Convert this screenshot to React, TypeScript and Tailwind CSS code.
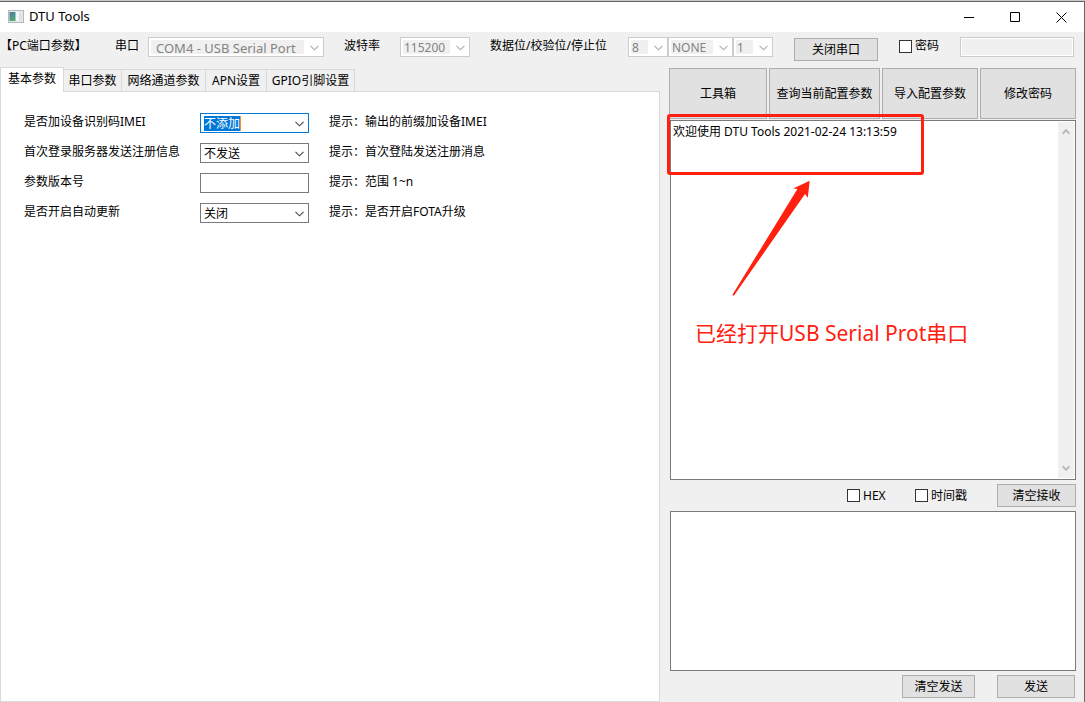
import { useState } from 'react';
import type { ReactNode } from 'react';

function Chevron({ className = '' }: { className?: string }) {
  return (
    <svg className={className} width="9" height="6" viewBox="0 0 9 6" fill="none" stroke="currentColor" aria-hidden="true">
      <path d="M0.5 0.8 4.5 4.8 8.5 0.8" strokeWidth="1.1" />
    </svg>
  );
}

function ScrollArrow({ className = '' }: { className?: string }) {
  return (
    <svg className={className} width="8" height="7" viewBox="0 0 8 7" fill="none" stroke="#b8b8b8" strokeWidth="1.9" aria-hidden="true">
      <path d="M0.6 1.2 4 4.8 7.4 1.2" />
    </svg>
  );
}

type ComboProps = {
  id: string;
  label?: string;
  options: string[];
  width: string;
  disabled?: boolean;
  focused?: boolean;
};

function Combo({ id, label, options, width, disabled, focused }: ComboProps) {
  const frame = disabled ? 'border-[#cccccc] text-[#838383]' : focused ? 'border-[#0078d7] text-white' : 'border-[#7a7a7a] text-black';
  return (
    <div className={`relative flex h-5 shrink-0 items-center border bg-white ${frame} ${width}`}>
      {disabled && <span className="absolute inset-y-0.5 left-0.5 right-[19px] bg-[#f0f0f0]" />}
      {focused && <span className="absolute top-0.5 bottom-px left-[3px] w-[37px] border-r border-[#ff8c28] bg-[#0078d7]" />}
      <select
        id={id}
        aria-label={label}
        disabled={disabled}
        className="relative h-full w-full appearance-none bg-transparent pt-[3px] pb-px pl-[3px] leading-[14px] opacity-100 outline-none"
      >
        {options.map((o) => (
          <option key={o} className="text-black">
            {o}
          </option>
        ))}
      </select>
      <Chevron className={`pointer-events-none absolute right-1 top-[7px] ${disabled ? 'text-[#acacac]' : 'text-[#444444]'}`} />
    </div>
  );
}

function Btn({ children, className = '' }: { children: ReactNode; className?: string }) {
  return (
    <button type="button" className={`shrink-0 border border-[#adadad] bg-[#e1e1e1] text-center whitespace-nowrap ${className}`}>
      {children}
    </button>
  );
}

function Check({ label, className = '' }: { label: string; className?: string }) {
  return (
    <label className={`flex shrink-0 items-center gap-[3px] whitespace-nowrap ${className}`}>
      <input type="checkbox" className="size-[13px] appearance-none border border-[#333333] bg-white checked:bg-[#0078d7]" />
      {label}
    </label>
  );
}

function TitleBar() {
  return (
    <header className="flex h-[30px] shrink-0 items-center bg-white pl-2">
      <svg width="16" height="14" viewBox="0 0 16 14" aria-hidden="true">
        <defs>
          <linearGradient id="pane" x1="0" y1="0" x2="0.6" y2="1">
            <stop offset="0" stopColor="#4a78a8" />
            <stop offset="1" stopColor="#57a878" />
          </linearGradient>
        </defs>
        <rect x="0.5" y="0.5" width="15" height="12" fill="#e9eaec" stroke="#b4b7bb" />
        <rect x="1.5" y="2" width="6" height="9" fill="url(#pane)" />
        <rect x="8" y="2" width="3" height="9" fill="#f4f6f7" />
        <rect x="11" y="3" width="3" height="8" fill="#dde2e4" />
      </svg>
      <h1 className="ml-[5px] flex-1 text-[13px]">DTU Tools</h1>
      <button type="button" aria-label="最小化" className="flex h-full w-[46px] items-center justify-center">
        <svg width="11" height="11" viewBox="0 0 11 11" stroke="#000"><path d="M0 5.5H10" /></svg>
      </button>
      <button type="button" aria-label="最大化" className="flex h-full w-[46px] items-center justify-center">
        <svg width="11" height="11" viewBox="0 0 11 11" fill="none" stroke="#000"><path d="M0.5 0.5H9.5V9.5H0.5Z" /></svg>
      </button>
      <button type="button" aria-label="关闭" className="flex h-full w-[46px] items-center justify-center">
        <svg width="11" height="11" viewBox="0 0 11 11" stroke="#000"><path d="M0.5 0.5 10.5 10.5M10.5 0.5 0.5 10.5" /></svg>
      </button>
    </header>
  );
}

function Toolbar() {
  return (
    <div className="flex h-9 shrink-0 items-start pt-[5px] whitespace-nowrap">
      <span className="w-[115px] shrink-0 leading-[18px]">【PC端口参数】</span>
      <label htmlFor="port" className="w-[33px] shrink-0 leading-[18px]">串口</label>
      <Combo id="port" options={['COM4 - USB Serial Port']} width="w-44 pl-1 text-[13px]" disabled />
      <label htmlFor="baud" className="ml-5 w-14 shrink-0 leading-[18px]">波特率</label>
      <Combo id="baud" options={['115200']} width="w-[70px]" disabled />
      <label htmlFor="bits" className="ml-5 w-[138px] shrink-0 leading-[18px]">数据位/校验位/停止位</label>
      <Combo id="bits" options={['8']} width="w-10" disabled />
      <Combo id="parity" label="校验位" options={['NONE']} width="w-[65px]" disabled />
      <Combo id="stop" label="停止位" options={['1']} width="w-10" disabled />
      <Btn className="mt-px ml-[21px] h-[23px] w-[84px]">关闭串口</Btn>
      <Check label="密码" className="ml-[21px] w-[61px] leading-[18px]" />
      <input aria-label="密码" disabled className="mr-2.5 h-5 min-w-0 flex-1 border border-[#cccccc] bg-[#f0f0f0] shadow-[inset_0_0_0_1px_white]" />
    </div>
  );
}

const tabs = [
  { name: '基本参数', width: 'w-16' },
  { name: '串口参数', width: 'w-[58px]' },
  { name: '网络通道参数', width: 'w-[84px]' },
  { name: 'APN设置', width: 'w-[61px]' },
  { name: 'GPIO引脚设置', width: 'w-[88px]' },
];

function Tabs() {
  const [active, setActive] = useState(0);
  return (
    <div role="tablist" className="flex h-[23px] shrink-0 items-end">
      {tabs.map((t, i) => (
        <button
          key={t.name}
          type="button"
          role="tab"
          aria-selected={i === active}
          onClick={() => setActive(i)}
          className={`shrink-0 border-[#d9d9d9] text-center whitespace-nowrap ${t.width} ${
            i === active ? 'relative z-10 -mb-px h-[25px] border border-b-0 bg-white pb-[3px]' : 'h-[22px] border-t border-r bg-[#f0f0f0]'
          }`}
        >
          {t.name}
        </button>
      ))}
    </div>
  );
}

const rows = [
  { id: 'imei', label: '是否加设备识别码IMEI', options: ['不添加', '添加'], hint: '提示：输出的前缀加设备IMEI', focused: true },
  { id: 'reg', label: '首次登录服务器发送注册信息', options: ['不发送', '发送'], hint: '提示：首次登陆发送注册消息' },
  { id: 'ver', label: '参数版本号', hint: '提示：范围 1~n' },
  { id: 'update', label: '是否开启自动更新', options: ['关闭', '开启'], hint: '提示：是否开启FOTA升级' },
];

function BasicForm() {
  return (
    <div className="flex-1 border border-[#d9d9d9] bg-white pt-4 pl-[23px]">
      {rows.map((r) => (
        <div key={r.id} className="flex h-[30px] items-center whitespace-nowrap">
          <label htmlFor={r.id} className="w-44 shrink-0 pb-0.5">{r.label}</label>
          {r.options ? (
            <Combo id={r.id} options={r.options} width="w-[109px]" focused={r.focused} />
          ) : (
            <input id={r.id} className="h-5 w-[109px] border border-[#7a7a7a] bg-white px-1 outline-none" />
          )}
          <span className="ml-5 pb-0.5">{r.hint}</span>
        </div>
      ))}
    </div>
  );
}

function Annotation() {
  return (
    <div className="pointer-events-none absolute -top-px -left-px text-[#ff2010]">
      <div className="absolute -top-1.5 -left-[3px] h-[61px] w-[257px] rounded-[3px] border-3 border-[#ff2010]" />
      <svg className="absolute top-[60px] left-[60px]" width="84" height="118" viewBox="0 0 84 118" fill="currentColor" aria-hidden="true">
        <path d="M79.7 0.8 63.3 8.6 67.4 9 2.6 114.6Q2.6 116 4 115.6L75 14 77.8 17.8Z" />
      </svg>
      <p className="absolute top-[198px] left-[25px] text-[21px] leading-[30px] whitespace-nowrap">已经打开USB Serial Prot串口</p>
    </div>
  );
}

function RightColumn() {
  return (
    <aside className="flex w-[407px] shrink-0 flex-col pb-1">
      <div className="grid h-[51px] grid-cols-[98fr_111fr_96fr_96fr] gap-0.5">
        <Btn>工具箱</Btn>
        <Btn>查询当前配置参数</Btn>
        <Btn>导入配置参数</Btn>
        <Btn>修改密码</Btn>
      </div>
      <div className="relative mt-px ml-px flex min-h-[300px] flex-1 border border-[#7a7a7a] bg-white p-px">
        <textarea
          aria-label="接收"
          readOnly
          defaultValue="欢迎使用 DTU Tools 2021-02-24 13:13:59"
          className="min-w-0 flex-1 resize-none px-px py-px leading-[18px] outline-none"
        />
        <div className="flex w-4 flex-col items-center justify-between bg-[#f0f0f0] py-1.5">
          <ScrollArrow className="rotate-180" />
          <ScrollArrow />
        </div>
        <Annotation />
      </div>
      <div className="flex h-[31px] items-center justify-end">
        <Check label="HEX" className="w-[68px]" />
        <Check label="时间戳" className="w-[82px]" />
        <Btn className="h-[23px] w-[79px]">清空接收</Btn>
      </div>
      <textarea aria-label="发送内容" className="ml-px h-40 resize-none border border-[#7a7a7a] bg-white p-1 outline-none" />
      <div className="mt-1 flex justify-end gap-[22px] pr-px">
        <Btn className="h-[23px] w-[73px]">清空发送</Btn>
        <Btn className="h-[23px] w-[78px]">发送</Btn>
      </div>
    </aside>
  );
}

export default function App() {
  return (
    <div className="flex min-h-screen flex-col border-t border-[#c8c8c8] bg-[#f0f0f0] font-['Noto_Sans','Noto_Sans_CJK_SC',sans-serif] text-xs text-black">
      <div className="flex flex-1 flex-col border-t border-r border-[#666666]">
        <TitleBar />
        <Toolbar />
        <main className="flex flex-1 gap-[9px] pr-2">
          <section className="flex min-w-0 flex-1 flex-col">
            <Tabs />
            <BasicForm />
          </section>
          <RightColumn />
        </main>
      </div>
    </div>
  );
}
